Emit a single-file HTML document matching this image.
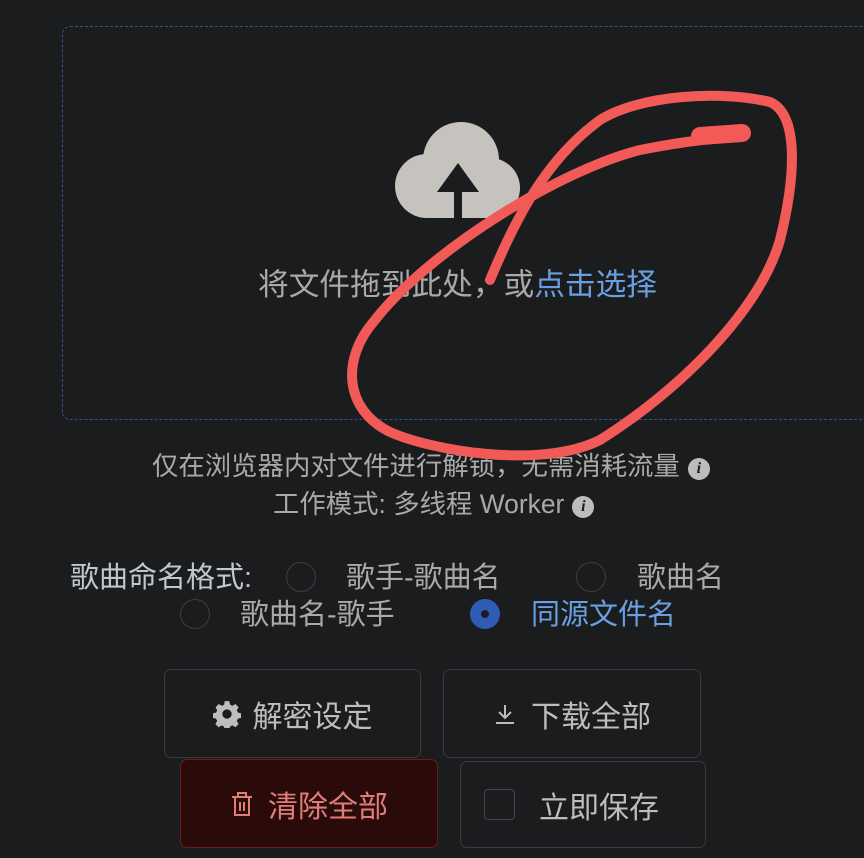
<!DOCTYPE html>
<html><head><meta charset="utf-8"><style>
html,body{margin:0;padding:0;background:#1b1c1e;width:864px;height:858px;overflow:hidden;font-family:"Liberation Sans","Noto Sans CJK SC",sans-serif;}
.abs{position:absolute}
.drop{left:62px;top:26px;width:820px;height:394px;border:1px dashed #34538a;border-radius:8px;box-sizing:border-box}
.t{color:#a9a9a9;white-space:nowrap;line-height:1}
.radio{width:30px;height:30px;border:1.5px solid #3e3f42;border-radius:50%;box-sizing:border-box}
.btn{border:1.5px solid #3a3b3e;border-radius:7px;box-sizing:border-box;display:flex;align-items:center;justify-content:center;color:#bdbdbd;font-size:30px}
.info{display:inline-block;width:22px;height:22px;border-radius:50%;background:#bdbdbd;color:#1b1c1e;font:italic bold 16px "Liberation Serif",serif;text-align:center;line-height:22px;vertical-align:2px;margin-left:8px}
</style></head><body>
<div class="abs drop"></div>
<svg class="abs" style="left:0;top:0" width="864" height="858">
<g fill="#c6c3be">
<circle cx="427" cy="186" r="32"/>
<circle cx="461" cy="160" r="38"/>
<circle cx="490" cy="188" r="30"/>
<rect x="427" y="180" width="63" height="38"/>
</g>
<path d="M454 192 L454 218 L462 218 L462 192 Z M458 163 L437 192 L479 192 Z" fill="#1b1c1e"/>
</svg>
<div class="abs t" style="left:258px;top:270px;font-size:30.7px">将文件拖到此处，或<span style="color:#6a9fe2">点击选择</span></div>
<div class="abs t" style="left:152px;top:453px;font-size:26.4px">仅在浏览器内对文件进行解锁，无需消耗流量<span class="info">i</span></div>
<div class="abs t" style="left:273px;top:491px;font-size:26.4px">工作模式: 多线程 Worker<span class="info">i</span></div>
<div class="abs t" style="left:70px;top:564px;font-size:29px;color:#c3c6cc">歌曲命名格式:</div>
<div class="abs radio" style="left:286px;top:562px"></div>
<div class="abs t" style="left:346px;top:564px;font-size:29px">歌手-歌曲名</div>
<div class="abs radio" style="left:576px;top:562px"></div>
<div class="abs t" style="left:637px;top:564px;font-size:29px">歌曲名</div>
<div class="abs radio" style="left:180px;top:599px"></div>
<div class="abs t" style="left:240px;top:601px;font-size:29px">歌曲名-歌手</div>
<div class="abs radio" style="left:470px;top:599px;background:#2f5db5;border:none"><div style="position:absolute;left:11px;top:11px;width:8px;height:8px;border-radius:50%;background:#1b1c1e"></div></div>
<div class="abs t" style="left:531px;top:601px;font-size:29px;color:#6a9fe2">同源文件名</div>
<div class="abs btn" style="left:164px;top:669px;width:257px;height:89px">
<svg width="28" height="28" viewBox="0 0 24 24" style="margin-right:12px"><path fill="#bdbdbd" d="M10 1h4l.6 3 2 1 2.6-1.6 2.8 2.8-1.6 2.6 1 2 3 .6v4l-3 .6-1 2 1.6 2.6-2.8 2.8-2.6-1.6-2 1-.6 3h-4l-.6-3-2-1-2.6 1.6-2.8-2.8 1.6-2.6-1-2-3-.6v-4l3-.6 1-2L2.2 6.2 5 3.4l2.6 1.6 2-1z M12 8a4 4 0 1 0 0 8 4 4 0 1 0 0-8z" fill-rule="evenodd"/></svg>解密设定</div>
<div class="abs btn" style="left:443px;top:669px;width:258px;height:89px">
<svg width="24" height="24" viewBox="0 0 24 24" style="margin-right:14px"><path d="M12 3v13M6 10l6 6 6-6M3 21h18" stroke="#bdbdbd" stroke-width="2" fill="none"/></svg>下载全部</div>
<div class="abs btn" style="left:180px;top:759px;width:258px;height:89px;background:#2a0b0a;border-color:#6a1d1b;color:#e07d78">
<svg width="24" height="28" viewBox="0 0 24 26" style="margin-right:14px"><path d="M2 6h20M8 6V2h8v4M5 6v18h14V6M10 11v9M14 11v9" stroke="#e07d78" stroke-width="2" fill="none"/></svg>清除全部</div>
<div class="abs btn" style="left:460px;top:761px;width:246px;height:87px;justify-content:flex-start;padding-left:23px">
<div style="width:31px;height:31px;border:1.5px solid #45464a;border-radius:4px;box-sizing:border-box;margin-right:24px"></div>立即保存</div>
<svg class="abs" style="left:0;top:0" width="864" height="858">
<path d="M490 280 C515 220 545 160 600 120 C640 95 720 90 770 102 C800 115 795 180 780 240 C760 310 680 390 600 440 C540 470 430 450 390 432 C345 410 340 360 375 320 C430 250 560 170 640 150 C690 140 720 138 740 137" stroke="#f25a58" stroke-width="10" fill="none" stroke-linecap="round"/>
<path d="M700 136 L742 133" stroke="#f25a58" stroke-width="18" stroke-linecap="round"/>
</svg>
</body></html>
